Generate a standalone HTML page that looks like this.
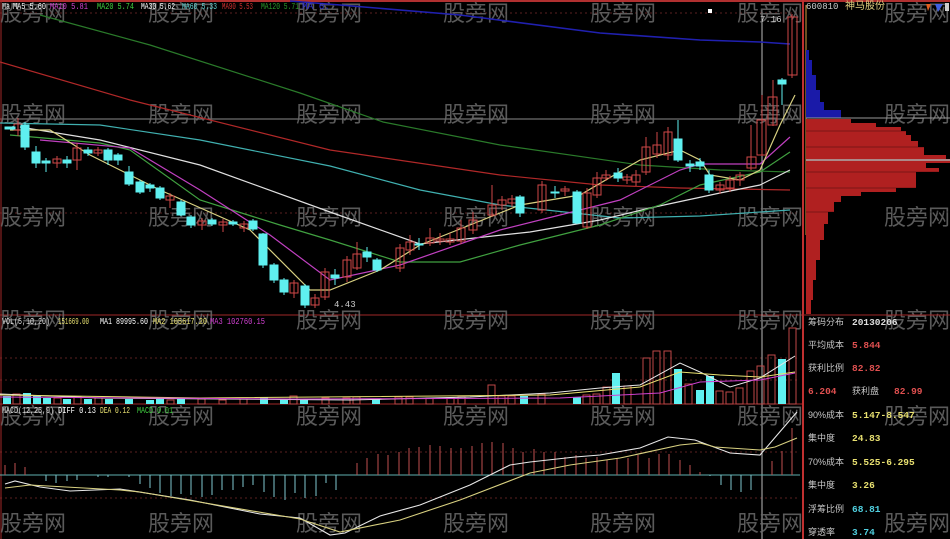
<!DOCTYPE html>
<html><head><meta charset="utf-8"><style>
html,body{margin:0;padding:0;background:#000;overflow:hidden}
svg{display:block}
text{font-family:"Liberation Mono","Noto Sans CJK SC",monospace}
.wm{font-family:"Liberation Sans","Noto Sans CJK SC",sans-serif;font-size:22px;fill:#6a6a6a;opacity:.85}
.lb{font-family:"Liberation Sans","Noto Sans CJK SC",sans-serif;font-size:9px;fill:#c8c8c8}
.v{font-family:"Liberation Mono",monospace;font-size:9.5px;font-weight:bold}
.lg{font-family:"Liberation Mono",monospace;font-size:9px}
</style></head><body>
<svg width="950" height="539" viewBox="0 0 950 539" xmlns="http://www.w3.org/2000/svg">
<rect width="950" height="539" fill="#000"/>
<!-- grid -->
<g stroke="#5a2020" stroke-dasharray="2,3" stroke-width="1">
<line x1="0" y1="13" x2="800" y2="13"/><line x1="0" y1="213" x2="800" y2="213"/>
<line x1="0" y1="358" x2="800" y2="358"/><line x1="0" y1="380" x2="800" y2="380"/>
<line x1="0" y1="452" x2="800" y2="452"/><line x1="0" y1="498" x2="800" y2="498"/>
</g>
<line x1="0" y1="119" x2="800" y2="119" stroke="#8a8a8a"/>
<line x1="0" y1="1" x2="950" y2="1" stroke="#b03030" stroke-width="2"/>
<line x1="0" y1="315" x2="803" y2="315" stroke="#a02828"/>
<line x1="0" y1="404" x2="803" y2="404" stroke="#a02828"/>
<line x1="1" y1="0" x2="1" y2="539" stroke="#a02828"/>
<line x1="803" y1="0" x2="803" y2="539" stroke="#c03030" stroke-width="2"/>
<line x1="762" y1="10" x2="762" y2="539" stroke="#bbb"/>
<!-- watermarks -->
<g class="wm">
<text x="0" y="21">股旁网</text><text x="148" y="21">股旁网</text><text x="296" y="21">股旁网</text><text x="443" y="21">股旁网</text><text x="590" y="21">股旁网</text><text x="737" y="21">股旁网</text><text x="884" y="21">股旁网</text>
<text x="0" y="122">股旁网</text><text x="148" y="122">股旁网</text><text x="296" y="122">股旁网</text><text x="443" y="122">股旁网</text><text x="590" y="122">股旁网</text><text x="737" y="122">股旁网</text><text x="884" y="122">股旁网</text>
<text x="0" y="225">股旁网</text><text x="148" y="225">股旁网</text><text x="296" y="225">股旁网</text><text x="443" y="225">股旁网</text><text x="590" y="225">股旁网</text><text x="737" y="225">股旁网</text><text x="884" y="225">股旁网</text>
<text x="0" y="328">股旁网</text><text x="148" y="328">股旁网</text><text x="296" y="328">股旁网</text><text x="443" y="328">股旁网</text><text x="590" y="328">股旁网</text><text x="737" y="328">股旁网</text><text x="884" y="328">股旁网</text>
<text x="0" y="424">股旁网</text><text x="148" y="424">股旁网</text><text x="296" y="424">股旁网</text><text x="443" y="424">股旁网</text><text x="590" y="424">股旁网</text><text x="737" y="424">股旁网</text><text x="884" y="424">股旁网</text>
<text x="0" y="531">股旁网</text><text x="148" y="531">股旁网</text><text x="296" y="531">股旁网</text><text x="443" y="531">股旁网</text><text x="590" y="531">股旁网</text><text x="737" y="531">股旁网</text><text x="884" y="531">股旁网</text>
</g>
<!-- MA lines -->
<g fill="none" stroke-width="1.2">
<polyline stroke="#2020b0" stroke-width="1.6" points="290,1 340,5 460,15 600,33 700,40 760,42 790,44"/>
<polyline stroke="#b02828" points="0,62 130,100 330,150 500,175 600,185 680,188 790,190"/>
<polyline stroke="#2a7a2a" points="40,15 150,45 300,93 383,122 500,145 640,165 720,170 790,172"/>
<polyline stroke="#40b0b0" points="0,123 100,125 200,140 330,166 420,190 500,205 620,218 700,216 790,210"/>
<polyline stroke="#e0e0e0" points="20,127 100,140 200,165 330,212 420,244 530,232 600,220 650,208 720,193 760,185 790,170"/>
<polyline stroke="#40a040" points="10,135 100,143 130,150 200,200 280,225 330,240 400,262 460,262 520,245 600,225 660,205 700,185 760,172 790,152"/>
<polyline stroke="#c040c0" points="40,140 130,148 200,190 270,235 330,280 400,265 500,230 560,215 620,200 680,170 700,164 760,164 790,137"/>
<polyline stroke="#d8d080" points="10,130 50,130 90,155 160,190 250,230 310,290 330,290 380,270 420,245 520,205 580,195 640,160 680,150 700,160 710,175 740,180 760,170 780,125 795,95"/>
</g>
<!-- candles -->
<g stroke="#d04848" fill="none" stroke-width="1">
<line x1="18" y1="118" x2="18" y2="136"/><rect x="14" y="124" width="8" height="6"/>
<line x1="57" y1="156" x2="57" y2="168"/><rect x="53" y="159" width="8" height="4"/>
<line x1="77" y1="143" x2="77" y2="170"/><rect x="73" y="148" width="8" height="12"/>
<line x1="98" y1="147" x2="98" y2="156"/><rect x="94" y="150" width="8" height="3"/>
<line x1="170" y1="193" x2="170" y2="208"/><rect x="166" y="196" width="8" height="4"/>
<line x1="202" y1="218" x2="202" y2="230"/><rect x="198" y="221" width="8" height="4"/>
<line x1="223" y1="219" x2="223" y2="232"/><rect x="219" y="222" width="8" height="3"/>
<line x1="244" y1="221" x2="244" y2="232"/><rect x="240" y="224" width="8" height="4"/>
<line x1="294" y1="280" x2="294" y2="298"/><rect x="290" y="283" width="8" height="10"/>
<line x1="315" y1="294" x2="315" y2="308"/><rect x="311" y="298" width="8" height="7"/>
<line x1="325" y1="268" x2="325" y2="300"/><rect x="321" y="272" width="8" height="25"/>
<line x1="347" y1="256" x2="347" y2="282"/><rect x="343" y="260" width="8" height="17"/>
<line x1="357" y1="242" x2="357" y2="270"/><rect x="353" y="254" width="8" height="14"/>
<line x1="400" y1="244" x2="400" y2="272"/><rect x="396" y="248" width="8" height="20"/>
<line x1="410" y1="235" x2="410" y2="255"/><rect x="406" y="242" width="8" height="8"/>
<line x1="430" y1="228" x2="430" y2="246"/><rect x="426" y="238" width="8" height="5"/>
<line x1="440" y1="233" x2="440" y2="245"/><rect x="436" y="239" width="8" height="2"/>
<line x1="450" y1="233" x2="450" y2="245"/><rect x="446" y="239" width="8" height="3"/>
<line x1="461" y1="220" x2="461" y2="244"/><rect x="457" y="228" width="8" height="13"/>
<line x1="473" y1="212" x2="473" y2="234"/><rect x="469" y="220" width="8" height="10"/>
<line x1="492" y1="185" x2="492" y2="217"/><rect x="488" y="205" width="8" height="10"/>
<line x1="502" y1="196" x2="502" y2="210"/><rect x="498" y="200" width="8" height="5"/>
<line x1="512" y1="195" x2="512" y2="207"/><rect x="508" y="199" width="8" height="4"/>
<line x1="542" y1="181" x2="542" y2="213"/><rect x="538" y="185" width="8" height="25"/>
<line x1="565" y1="186" x2="565" y2="196"/><rect x="561" y="189" width="8" height="2"/>
<line x1="587" y1="188" x2="587" y2="229"/><rect x="583" y="193" width="8" height="34"/>
<line x1="597" y1="172" x2="597" y2="198"/><rect x="593" y="178" width="8" height="17"/>
<line x1="606" y1="170" x2="606" y2="181"/><rect x="602" y="175" width="8" height="3"/>
<line x1="627" y1="174" x2="627" y2="184"/><rect x="623" y="177" width="8" height="3"/>
<line x1="636" y1="170" x2="636" y2="186"/><rect x="632" y="175" width="8" height="7"/>
<line x1="646" y1="137" x2="646" y2="175"/><rect x="642" y="147" width="8" height="25"/>
<line x1="657" y1="132" x2="657" y2="158"/><rect x="653" y="145" width="8" height="9"/>
<line x1="668" y1="127" x2="668" y2="160"/><rect x="664" y="132" width="8" height="23"/>
<line x1="720" y1="182" x2="720" y2="194"/><rect x="716" y="185" width="8" height="5"/>
<line x1="730" y1="176" x2="730" y2="192"/><rect x="726" y="180" width="8" height="8"/>
<line x1="740" y1="172" x2="740" y2="186"/><rect x="736" y="175" width="8" height="5"/>
<line x1="751" y1="125" x2="751" y2="170"/><rect x="747" y="157" width="9" height="11"/>
<line x1="762" y1="95" x2="762" y2="156"/><rect x="757" y="120" width="9" height="35"/>
<line x1="773" y1="80" x2="773" y2="126"/><rect x="768" y="97" width="9" height="28"/>
<line x1="792" y1="14" x2="792" y2="78"/><rect x="788" y="17" width="9" height="58"/>
</g>
<g stroke="#5ff0f0" fill="#5ff0f0" stroke-width="1">
<line x1="25" y1="122" x2="25" y2="150"/><rect x="21" y="125" width="8" height="22"/>
<line x1="36" y1="146" x2="36" y2="168"/><rect x="32" y="152" width="8" height="11"/>
<line x1="46" y1="158" x2="46" y2="172"/><rect x="42" y="161" width="8" height="2"/>
<line x1="67" y1="156" x2="67" y2="168"/><rect x="63" y="160" width="8" height="3"/>
<line x1="88" y1="147" x2="88" y2="156"/><rect x="84" y="150" width="8" height="3"/>
<line x1="108" y1="148" x2="108" y2="165"/><rect x="104" y="150" width="8" height="10"/>
<line x1="118" y1="153" x2="118" y2="165"/><rect x="114" y="155" width="8" height="5"/>
<line x1="129" y1="166" x2="129" y2="186"/><rect x="125" y="172" width="8" height="12"/>
<line x1="140" y1="180" x2="140" y2="194"/><rect x="136" y="182" width="8" height="10"/>
<line x1="150" y1="183" x2="150" y2="192"/><rect x="146" y="185" width="8" height="3"/>
<line x1="160" y1="186" x2="160" y2="200"/><rect x="156" y="188" width="8" height="10"/>
<line x1="181" y1="200" x2="181" y2="216"/><rect x="177" y="202" width="8" height="13"/>
<line x1="191" y1="215" x2="191" y2="228"/><rect x="187" y="217" width="8" height="8"/>
<line x1="212" y1="218" x2="212" y2="226"/><rect x="208" y="220" width="8" height="4"/>
<line x1="233" y1="220" x2="233" y2="226"/><rect x="229" y="222" width="8" height="2"/>
<line x1="253" y1="219" x2="253" y2="231"/><rect x="249" y="221" width="8" height="8"/>
<line x1="263" y1="233" x2="263" y2="268"/><rect x="259" y="234" width="8" height="31"/>
<line x1="274" y1="263" x2="274" y2="283"/><rect x="270" y="265" width="8" height="15"/>
<line x1="284" y1="278" x2="284" y2="295"/><rect x="280" y="280" width="8" height="12"/>
<line x1="305" y1="284" x2="305" y2="308"/><rect x="301" y="286" width="8" height="19"/>
<line x1="335" y1="269" x2="335" y2="285"/><rect x="331" y="275" width="8" height="3"/>
<line x1="367" y1="247" x2="367" y2="262"/><rect x="363" y="252" width="8" height="5"/>
<line x1="377" y1="258" x2="377" y2="272"/><rect x="373" y="260" width="8" height="10"/>
<line x1="419" y1="238" x2="419" y2="250"/><rect x="415" y="244" width="8" height="1"/>
<line x1="520" y1="195" x2="520" y2="217"/><rect x="516" y="197" width="8" height="16"/>
<line x1="555" y1="186" x2="555" y2="198"/><rect x="551" y="192" width="8" height="1"/>
<line x1="577" y1="190" x2="577" y2="224"/><rect x="573" y="192" width="8" height="31"/>
<line x1="618" y1="168" x2="618" y2="182"/><rect x="614" y="173" width="8" height="5"/>
<line x1="678" y1="120" x2="678" y2="162"/><rect x="674" y="139" width="8" height="21"/>
<line x1="690" y1="160" x2="690" y2="172"/><rect x="686" y="164" width="8" height="2"/>
<line x1="700" y1="158" x2="700" y2="170"/><rect x="696" y="162" width="8" height="4"/>
<line x1="709" y1="170" x2="709" y2="193"/><rect x="705" y="175" width="8" height="15"/>
<line x1="782" y1="78" x2="782" y2="105"/><rect x="778" y="80" width="8" height="4"/>
<line x1="13" y1="126" x2="13" y2="130"/><rect x="5" y="127" width="10" height="2"/>
</g>
<text x="334" y="307" fill="#ccc" font-size="9" font-family="Liberation Sans">4.43</text>
<text x="760" y="22" fill="#ccc" font-size="9" font-family="Liberation Sans">7.16</text>
<rect x="708" y="9" width="4" height="4" fill="#fff"/>
<!-- top legend -->
<g class="lg" lengthAdjust="spacingAndGlyphs">
<text x="2" y="9" fill="#ddd" textLength="8" lengthAdjust="spacingAndGlyphs">Ma</text>
<text x="13" y="9" fill="#fff" textLength="33" lengthAdjust="spacingAndGlyphs">MA5 5.60</text>
<text x="50" y="9" fill="#d040d0" textLength="38" lengthAdjust="spacingAndGlyphs">MA10 5.81</text>
<text x="97" y="9" fill="#40d040" textLength="37" lengthAdjust="spacingAndGlyphs">MA20 5.74</text>
<text x="141" y="9" fill="#fff" textLength="34" lengthAdjust="spacingAndGlyphs">MA30 5.62</text>
<text x="182" y="9" fill="#60d0d0" textLength="35" lengthAdjust="spacingAndGlyphs">MA60 5.33</text>
<text x="222" y="9" fill="#d03030" textLength="31" lengthAdjust="spacingAndGlyphs">MA90 5.53</text>
<text x="261" y="9" fill="#2a9a2a" textLength="38" lengthAdjust="spacingAndGlyphs">MA120 5.71</text>
<text x="302" y="9" fill="#3030d0" textLength="28" lengthAdjust="spacingAndGlyphs">MA 6.</text>
</g>
<!-- chip distribution -->
<line x1="806" y1="5" x2="806" y2="235" stroke="#d8a040"/>
<g fill="#1a1aa8">
<rect x="806" y="50" width="3" height="10"/><rect x="806" y="60" width="6" height="15"/><rect x="806" y="75" width="10" height="15"/><rect x="806" y="90" width="14" height="12"/><rect x="806" y="102" width="18" height="8"/><rect x="806" y="110" width="35" height="8"/>
</g>
<g fill="#b02020">
<rect x="806" y="119" width="45" height="4"/><rect x="806" y="123" width="70" height="4"/><rect x="806" y="127" width="95" height="4"/><rect x="806" y="131" width="100" height="4"/><rect x="806" y="135" width="105" height="6"/><rect x="806" y="141" width="112" height="6"/><rect x="806" y="147" width="118" height="8"/><rect x="806" y="155" width="140" height="4"/><rect x="806" y="159" width="145" height="4"/><rect x="806" y="163" width="120" height="5"/><rect x="806" y="168" width="133" height="4"/><rect x="806" y="172" width="110" height="8"/><rect x="806" y="180" width="110" height="8"/><rect x="806" y="188" width="90" height="4"/><rect x="806" y="192" width="55" height="4"/><rect x="806" y="196" width="35" height="6"/><rect x="806" y="202" width="28" height="10"/><rect x="806" y="212" width="22" height="12"/><rect x="806" y="224" width="18" height="16"/><rect x="806" y="240" width="14" height="20"/><rect x="806" y="260" width="10" height="20"/><rect x="806" y="280" width="7" height="20"/><rect x="806" y="300" width="5" height="14"/>
</g>
<g stroke="#000" stroke-width="0.6" opacity="0.6">
<line x1="806" y1="131" x2="950" y2="131"/><line x1="806" y1="147" x2="950" y2="147"/><line x1="806" y1="172" x2="950" y2="172"/><line x1="806" y1="188" x2="950" y2="188"/><line x1="806" y1="212" x2="950" y2="212"/>
</g>
<line x1="806" y1="118" x2="950" y2="118" stroke="#999"/>
<line x1="806" y1="160" x2="950" y2="160" stroke="#aaa" stroke-width="1.5"/>
<line x1="803" y1="315" x2="950" y2="315" stroke="#a02828"/>
<text x="806" y="9" font-size="9" fill="#ccc" font-family="Liberation Sans">600810</text>
<text x="845" y="9" font-size="10" fill="#e0d080" font-family="Liberation Sans,Noto Sans CJK SC">神马股份</text>
<polygon points="935,4 943,4 938,12" fill="#4060e0"/><polygon points="926,4 931,4 928,11" fill="#e06020"/><rect x="945" y="3" width="4" height="8" fill="#ccc"/>
<!-- right panel text -->
<g>
<text class="lb" x="808" y="325">筹码分布</text><text class="v" x="852" y="325" fill="#ddd">20130206</text>
<text class="lb" x="808" y="348">平均成本</text><text class="v" x="852" y="348" fill="#e05050">5.844</text>
<text class="lb" x="808" y="371">获利比例</text><text class="v" x="852" y="371" fill="#e05050">82.82</text>
<text class="v" x="808" y="394" fill="#e05050">6.204</text><text class="lb" x="852" y="394">获利盘</text><text class="v" x="894" y="394" fill="#e05050">82.99</text>
<text class="lb" x="808" y="418">90%成本</text><text class="v" x="852" y="418" fill="#e8e070">5.147-8.547</text>
<text class="lb" x="808" y="441">集中度</text><text class="v" x="852" y="441" fill="#e8e070">24.83</text>
<text class="lb" x="808" y="465">70%成本</text><text class="v" x="852" y="465" fill="#e8e070">5.525-6.295</text>
<text class="lb" x="808" y="488">集中度</text><text class="v" x="852" y="488" fill="#e8e070">3.26</text>
<text class="lb" x="808" y="512">浮筹比例</text><text class="v" x="852" y="512" fill="#50d0e0">68.81</text>
<text class="lb" x="808" y="535">穿透率</text><text class="v" x="852" y="535" fill="#50d0e0">3.74</text>
</g>
<!-- volume legend -->
<g class="lg">
<text x="2" y="324" fill="#ddd" textLength="48" lengthAdjust="spacingAndGlyphs">VOL(5,10,20)</text>
<text x="58" y="324" fill="#e8e070" textLength="31" lengthAdjust="spacingAndGlyphs">151669.00</text>
<text x="100" y="324" fill="#fff" textLength="48" lengthAdjust="spacingAndGlyphs">MA1 89995.60</text>
<text x="153" y="324" fill="#e8e070" textLength="54" lengthAdjust="spacingAndGlyphs">MA2 105617.20</text>
<text x="210" y="324" fill="#d040d0" textLength="55" lengthAdjust="spacingAndGlyphs">MA3 102760.15</text>
</g>
<!-- volume bars -->
<g fill="#5ff0f0">
<rect x="3" y="396" width="8" height="8"/><rect x="23" y="393" width="8" height="11"/><rect x="33" y="395" width="8" height="9"/><rect x="43" y="398" width="8" height="6"/><rect x="63" y="399" width="8" height="5"/><rect x="84" y="399" width="8" height="5"/><rect x="105" y="399" width="8" height="5"/><rect x="125" y="399" width="8" height="5"/><rect x="146" y="400" width="8" height="4"/><rect x="156" y="399" width="8" height="5"/><rect x="177" y="399" width="8" height="5"/><rect x="260" y="397" width="8" height="7"/><rect x="280" y="399" width="8" height="5"/><rect x="300" y="399" width="8" height="5"/><rect x="372" y="399" width="8" height="5"/><rect x="520" y="396" width="8" height="8"/><rect x="573" y="397" width="8" height="7"/><rect x="612" y="373" width="8" height="31"/><rect x="674" y="369" width="8" height="35"/><rect x="696" y="390" width="8" height="14"/><rect x="706" y="376" width="8" height="28"/><rect x="778" y="359" width="8" height="45"/>
</g>
<g fill="none" stroke="#c04848">
<rect x="13" y="394" width="7" height="10"/><rect x="54" y="398" width="7" height="6"/><rect x="74" y="397" width="7" height="7"/><rect x="95" y="398" width="7" height="6"/><rect x="167" y="400" width="7" height="4"/><rect x="198" y="399" width="7" height="5"/><rect x="219" y="400" width="7" height="4"/><rect x="240" y="399" width="7" height="5"/><rect x="290" y="396" width="7" height="8"/><rect x="322" y="398" width="7" height="6"/><rect x="343" y="398" width="7" height="6"/><rect x="353" y="397" width="7" height="7"/><rect x="395" y="397" width="7" height="7"/><rect x="406" y="397" width="7" height="7"/><rect x="426" y="398" width="7" height="6"/><rect x="447" y="398" width="7" height="6"/><rect x="458" y="397" width="7" height="7"/><rect x="488" y="385" width="7" height="19"/><rect x="498" y="396" width="7" height="8"/><rect x="508" y="396" width="7" height="8"/><rect x="538" y="394" width="7" height="10"/><rect x="583" y="395" width="7" height="9"/><rect x="593" y="394" width="7" height="10"/><rect x="603" y="387" width="7" height="17"/><rect x="624" y="386" width="7" height="18"/><rect x="643" y="358" width="7" height="46"/><rect x="653" y="351" width="7" height="53"/><rect x="664" y="351" width="7" height="53"/><rect x="685" y="384" width="7" height="20"/><rect x="716" y="391" width="7" height="13"/><rect x="726" y="392" width="7" height="12"/><rect x="736" y="388" width="7" height="16"/><rect x="747" y="371" width="7" height="33"/><rect x="757" y="366" width="7" height="38"/><rect x="768" y="355" width="7" height="49"/><rect x="789" y="328" width="7" height="76"/>
</g>
<g fill="none" stroke-width="1">
<polyline stroke="#e8e8e8" points="0,394 100,398 350,400 470,397 550,393 600,388 640,385 680,363 700,372 730,387 760,378 795,356"/>
<polyline stroke="#e8e070" points="0,395 200,398 550,395 640,387 680,372 720,375 760,377 795,372"/>
<polyline stroke="#d040d0" points="0,397 300,399 560,398 660,393 700,382 760,380 795,373"/>
</g>
<!-- MACD -->
<g class="lg">
<text x="2" y="413" fill="#ddd" textLength="52" lengthAdjust="spacingAndGlyphs">MACD(12,26,9)</text>
<text x="58" y="413" fill="#fff" textLength="38" lengthAdjust="spacingAndGlyphs">DIFF 0.13</text>
<text x="100" y="413" fill="#e8e070" textLength="30" lengthAdjust="spacingAndGlyphs">DEA 0.12</text>
<text x="137" y="413" fill="#40d040" textLength="36" lengthAdjust="spacingAndGlyphs">MACD 0.01</text>
</g>
<line x1="0" y1="475" x2="800" y2="475" stroke="#60b0b0"/>
<g stroke="#c05050">
<line x1="5" y1="475" x2="5" y2="465"/><line x1="15" y1="475" x2="15" y2="463"/><line x1="25" y1="475" x2="25" y2="467"/>
<line x1="357" y1="475" x2="357" y2="463"/><line x1="367" y1="475" x2="367" y2="458"/><line x1="378" y1="475" x2="378" y2="454"/><line x1="388" y1="475" x2="388" y2="455"/><line x1="399" y1="475" x2="399" y2="452"/><line x1="409" y1="475" x2="409" y2="448"/><line x1="419" y1="475" x2="419" y2="447"/><line x1="430" y1="475" x2="430" y2="445"/><line x1="440" y1="475" x2="440" y2="446"/><line x1="451" y1="475" x2="451" y2="448"/><line x1="461" y1="475" x2="461" y2="448"/><line x1="472" y1="475" x2="472" y2="446"/><line x1="482" y1="475" x2="482" y2="443"/><line x1="492" y1="475" x2="492" y2="442"/><line x1="503" y1="475" x2="503" y2="443"/><line x1="513" y1="475" x2="513" y2="448"/><line x1="523" y1="475" x2="523" y2="452"/><line x1="534" y1="475" x2="534" y2="449"/><line x1="544" y1="475" x2="544" y2="452"/><line x1="555" y1="475" x2="555" y2="452"/><line x1="565" y1="475" x2="565" y2="457"/><line x1="576" y1="475" x2="576" y2="455"/><line x1="586" y1="475" x2="586" y2="458"/><line x1="597" y1="475" x2="597" y2="457"/><line x1="607" y1="475" x2="607" y2="460"/><line x1="617" y1="475" x2="617" y2="458"/><line x1="628" y1="475" x2="628" y2="458"/><line x1="638" y1="475" x2="638" y2="455"/><line x1="649" y1="475" x2="649" y2="458"/><line x1="659" y1="475" x2="659" y2="454"/><line x1="669" y1="475" x2="669" y2="454"/><line x1="680" y1="475" x2="680" y2="460"/><line x1="690" y1="475" x2="690" y2="465"/><line x1="700" y1="475" x2="700" y2="472"/><line x1="772" y1="475" x2="772" y2="461"/><line x1="782" y1="475" x2="782" y2="451"/><line x1="792" y1="475" x2="792" y2="428"/>
</g>
<g stroke="#80c8d0">
<line x1="46" y1="475" x2="46" y2="481"/><line x1="56" y1="475" x2="56" y2="483"/><line x1="67" y1="475" x2="67" y2="481"/><line x1="77" y1="475" x2="77" y2="480"/><line x1="98" y1="475" x2="98" y2="477"/><line x1="108" y1="475" x2="108" y2="477"/><line x1="129" y1="475" x2="129" y2="477"/><line x1="140" y1="475" x2="140" y2="484"/><line x1="150" y1="475" x2="150" y2="488"/><line x1="160" y1="475" x2="160" y2="493"/><line x1="171" y1="475" x2="171" y2="496"/><line x1="181" y1="475" x2="181" y2="494"/><line x1="191" y1="475" x2="191" y2="495"/><line x1="202" y1="475" x2="202" y2="497"/><line x1="212" y1="475" x2="212" y2="495"/><line x1="222" y1="475" x2="222" y2="490"/><line x1="233" y1="475" x2="233" y2="490"/><line x1="243" y1="475" x2="243" y2="487"/><line x1="253" y1="475" x2="253" y2="485"/><line x1="264" y1="475" x2="264" y2="492"/><line x1="274" y1="475" x2="274" y2="497"/><line x1="285" y1="475" x2="285" y2="500"/><line x1="295" y1="475" x2="295" y2="493"/><line x1="305" y1="475" x2="305" y2="498"/><line x1="316" y1="475" x2="316" y2="496"/><line x1="326" y1="475" x2="326" y2="483"/><line x1="336" y1="475" x2="336" y2="490"/><line x1="710" y1="475" x2="710" y2="476"/><line x1="721" y1="475" x2="721" y2="485"/><line x1="731" y1="475" x2="731" y2="490"/><line x1="741" y1="475" x2="741" y2="492"/><line x1="751" y1="475" x2="751" y2="490"/>
</g>
<g fill="none" stroke-width="1.1">
<polyline stroke="#e8e8e8" points="5,484 15,481 40,487 70,491 120,489 190,500 260,514 300,518 330,535 345,533 380,516 420,505 470,485 510,465 530,462 575,457 600,455 640,448 668,437 695,440 730,453 760,455 790,420 797,412"/>
<polyline stroke="#d8d080" points="5,488 30,485 120,490 140,492 300,519 340,532 400,520 460,500 530,473 570,465 620,458 680,445 700,443 715,447 760,450 775,447 797,438"/>
</g>
</svg>
</body></html>
